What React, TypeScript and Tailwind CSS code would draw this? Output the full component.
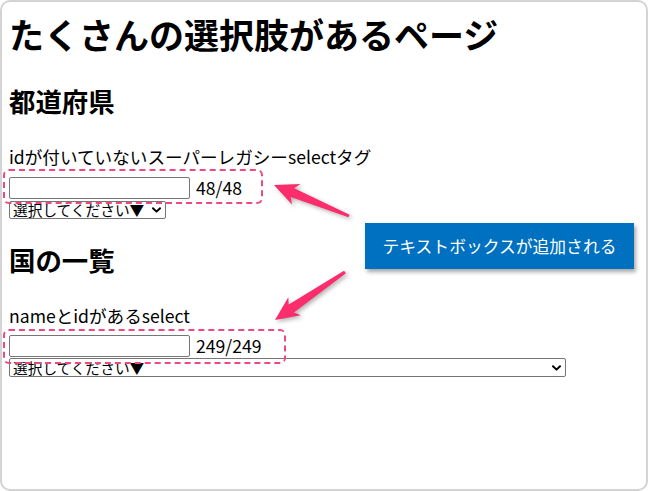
import React from "react";

const font = "font-['Noto_Sans_CJK_JP','Noto_Sans',sans-serif]";

const Chevron = () => (
  <svg width="9" height="6" viewBox="0 0 9 6" className="pointer-events-none absolute right-[5px] top-1/2 -translate-y-1/2">
    <path d="M1 1.2 L4.5 4.6 L8 1.2" fill="none" stroke="#000" strokeWidth="2" strokeLinecap="round" strokeLinejoin="round" />
  </svg>
);

const FakeSelect = ({ width, height }: { width: string; height: string }) => (
  <div className={`relative ${width} ${height}`}>
    <select
      className={`block appearance-none w-full h-full border border-[#767676] rounded-[2px] bg-white pl-[3px] pr-[12px] text-[14.7px] leading-[16px] text-black ${font}`}
      defaultValue=""
    >
      <option value="">選択してください▼</option>
    </select>
    <Chevron />
  </div>
);

const CountRow = ({ count }: { count: string }) => (
  <div className="flex items-center gap-[6px] h-[23px]">
    <input type="text" className="block w-[181px] h-[22px] border border-[#767676] rounded-[2px] bg-white" />
    <span className="text-[17.6px] leading-[22px] text-black">{count}</span>
  </div>
);

export default function App() {
  return (
    <div className={`relative w-[648px] h-[491px] overflow-hidden border-2 border-[#d4d4d4] rounded-[10px] bg-white text-black ${font}`}>
      <div className="pl-[7px] pt-[12px]">
        <h1 className="text-[35px] leading-[40px] font-bold">たくさんの選択肢があるページ</h1>

        <h2 className="mt-[31px] text-[26.4px] leading-[32px] font-bold">都道府県</h2>
        <p className="mt-[29px] text-[17.6px] leading-[22px]">idが付いていないスーパーレガシーselectタグ</p>
        <div className="mt-[8px]">
          <CountRow count="48/48" />
        </div>
        <div className="mt-[2px]">
          <FakeSelect width="w-[157px]" height="h-[18px]" />
        </div>

        <h2 className="mt-[25px] text-[26.4px] leading-[32px] font-bold">国の一覧</h2>
        <p className="mt-[29px] text-[17.6px] leading-[22px]">nameとidがあるselect</p>
        <div className="mt-[7px]">
          <CountRow count="249/249" />
        </div>
        <div className="mt-[1px]">
          <FakeSelect width="w-[557px]" height="h-[19px]" />
        </div>
      </div>

      {/* annotations */}
      <div className="absolute left-[1px] top-[167px] w-[260px] h-[35px] border-2 border-dashed border-[#ee4a80] rounded-[6px]" />
      <div className="absolute left-[1px] top-[327px] w-[283px] h-[35px] border-2 border-dashed border-[#ee4a80] rounded-[6px]" />

      <div className="absolute left-[363px] top-[221px] w-[269px] h-[46px] bg-[#0070c0] shadow-[2px_3px_4px_rgba(0,0,0,0.35)] flex items-center justify-center">
        <span className="text-white text-[16.8px] leading-[22px]">テキストボックスが追加される</span>
      </div>

      <svg
        className="absolute left-[-2px] top-[-2px] drop-shadow-[2px_2px_2px_rgba(0,0,0,0.3)]"
        width="648"
        height="491"
        viewBox="0 0 648 491"
      >
        <polygon
          fill="#fb2d6d"
          points="274,185 300.4,184 294.2,188.2 349.6,214.8 348.4,217.2 290.8,197 292,204.4"
        />
        <polygon
          fill="#fb2d6d"
          points="275,320 288.3,297.2 288.7,304.6 344,270.8 346,273.2 293.9,312.4 300.9,315.2"
        />
      </svg>
    </div>
  );
}
